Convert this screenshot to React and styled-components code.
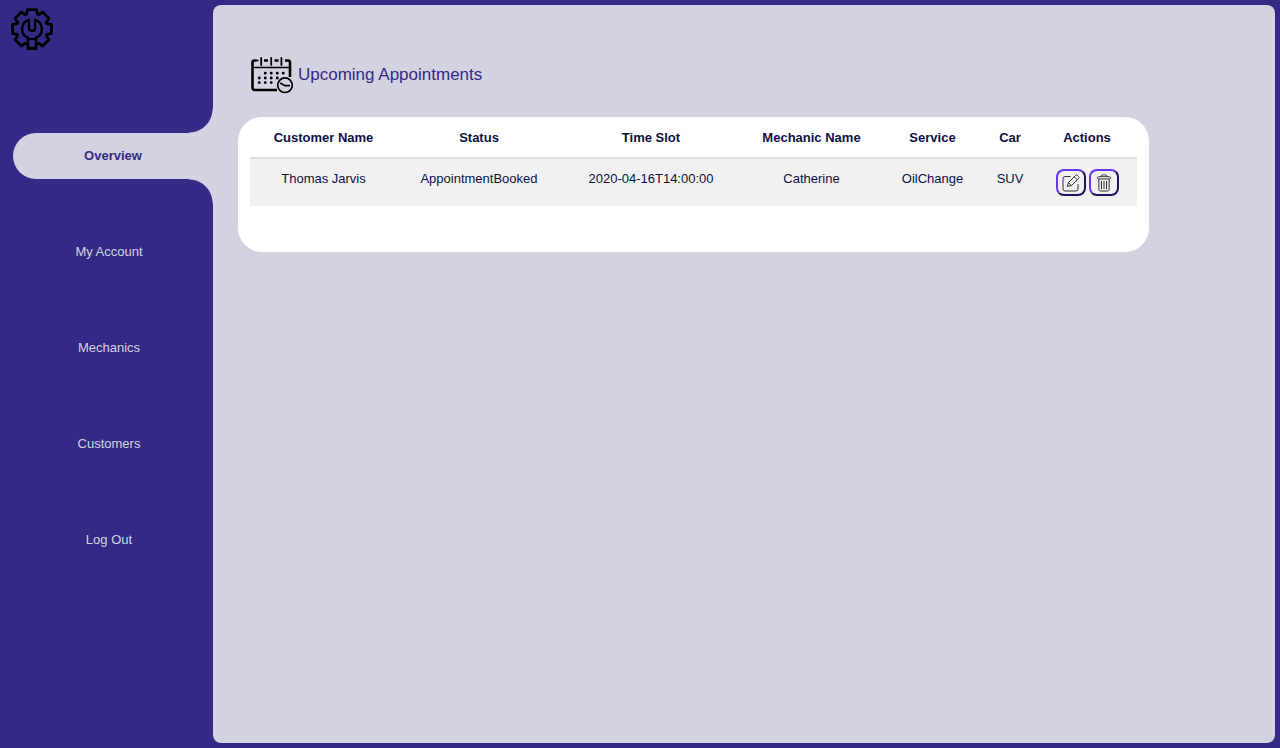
import React, { useState } from "react";
import styled, { createGlobalStyle } from "styled-components";

const navItems = ["Overview", "My Account", "Mechanics", "Customers", "Log Out"];

const columns = [
	{ title: "Customer Name", width: 147 },
	{ title: "Status", width: 164 },
	{ title: "Time Slot", width: 180 },
	{ title: "Mechanic Name", width: 141 },
	{ title: "Service", width: 101 },
	{ title: "Car", width: 54 },
	{ title: "Actions", width: 100 },
];

const initialAppointments = [
	{
		id: 1,
		customer: "Thomas Jarvis",
		status: "AppointmentBooked",
		timeSlot: "2020-04-16T14:00:00",
		mechanic: "Catherine",
		service: "OilChange",
		car: "SUV",
	},
];

const GearLogo = () => (
	<svg width="42" height="42" viewBox="-21 -21 42 42" fill="none" stroke="#000" strokeWidth="2.8" strokeLinejoin="round" aria-hidden="true">
		<path d="M-5.4-14.8-4.6-19.4H4.6L5.4-14.8 6.7-14.2 10.6-17 17-10.6 14.2-6.7 14.8-5.4 19.4-4.6V4.6L14.8 5.4 14.2 6.7 17 10.6 10.6 17 6.7 14.2 4 15.4V19.4H-4V15.4L-6.7 14.2-10.6 17-17 10.6-14.2 6.7-14.8 5.4-19.4 4.6V-4.6L-14.8-5.4-14.2-6.7-17-10.6-10.6-17-6.7-14.2Z" />
		<path d="M-3-9.3A9.8 9.8 0 0 0-4 9V19.4H4V9A9.8 9.8 0 0 0 3-9.3V0Q3 1.8 0 1.8T-3 0Z" strokeWidth="2.5" />
		<path d="M-4 10H4" strokeWidth="2" />
	</svg>
);

const CalendarIcon = () => (
	<svg width="43" height="40" viewBox="0 -2 43 40" fill="none" stroke="#000" aria-hidden="true">
		<path d="M5.5 3.5H3.5Q1.5 3.5 1.5 5.5V30.5Q1.5 33 4 33H26M13 3.5H17M23.5 3.5H27.5M34 3.5H37Q39 3.5 39 5.5V20" strokeWidth="2.6" />
		<path d="M5 3.5H7.5M2 10.5H39" strokeWidth="1.6" />
		<path d="M10.2 1V8M20.2 1V8M30.4 1V8" strokeWidth="1.8" strokeLinecap="round" />
		<path
			d="M14.2 16.2H14.3M20.2 16.2H20.3M26.2 16.2H26.3M32.2 16.2H32.3M8.2 21H8.3M14.2 21H14.3M20.2 21H20.3M26.2 21H26.3M8.2 25.6H8.3M14.2 25.6H14.3M20.2 25.6H20.3"
			strokeWidth="2.8"
			strokeLinecap="round"
		/>
		<circle cx="34" cy="28.2" r="7.3" strokeWidth="1.7" />
		<path d="M29.2 26 34 28.6H39" strokeWidth="1.6" />
	</svg>
);

const EditIcon = () => (
	<svg width="18" height="18" viewBox="0 0 18 18" fill="none" stroke="#333" strokeWidth="1" strokeLinejoin="round" aria-hidden="true">
		<path d="M8.5 2.5H3Q1 2.5 1 4.5V15Q1 17 3 17H14Q16 17 16 15V10" />
		<path d="M5.3 12.4 6.4 8.6 13.6 1.4Q14.5.6 15.4 1.4L16.6 2.6Q17.4 3.5 16.6 4.4L9.4 11.6ZM12.2 2.8 15.2 5.8M6.4 8.6 9.4 11.6" />
	</svg>
);

const TrashIcon = () => (
	<svg width="16" height="18" viewBox="0 0 16 18" fill="none" stroke="#333" strokeWidth="1" strokeLinejoin="round" aria-hidden="true">
		<path d="M2.9 5V15.3Q2.9 17 4.6 17H11.4Q13.1 17 13.1 15.3V5M2.5 2.7H13.5Q14.5 2.7 14.5 3.8 14.5 5 13.5 5H2.5Q1.5 5 1.5 3.8 1.5 2.7 2.5 2.7ZM5 2.7Q5 .9 6.5.9H9.5Q11 .9 11 2.7M5.5 7V15M8 7V15M10.5 7V15" />
	</svg>
);

const AppointmentTable = (props) => {
	return (
		<Card>
			<Table>
				<colgroup>
					{columns.map((column) => (
						<Column key={column.title} $width={column.width} />
					))}
				</colgroup>
				<thead>
					<tr>
						{columns.map((column) => (
							<th key={column.title} scope="col">
								{column.title}
							</th>
						))}
					</tr>
				</thead>
				<tbody>
					{props.appointments.map((item) => (
						<tr key={item.id}>
							<td>{item.customer}</td>
							<td>{item.status}</td>
							<td>{item.timeSlot}</td>
							<td>{item.mechanic}</td>
							<td>{item.service}</td>
							<td>{item.car}</td>
							<td>
								<Actions>
									<ActionButton type="button" aria-label="Edit appointment">
										<EditIcon />
									</ActionButton>
									<ActionButton
										type="button"
										aria-label="Delete appointment"
										onClick={() => props.onDelete(item.id)}
									>
										<TrashIcon />
									</ActionButton>
								</Actions>
							</td>
						</tr>
					))}
				</tbody>
			</Table>
		</Card>
	);
};

const App = () => {
	const [activeItem, setActiveItem] = useState("Overview");
	const [appointments, setAppointments] = useState(initialAppointments);

	const navClickHandler = (event, item) => {
		event.preventDefault();
		setActiveItem(item);
	};

	const deleteHandler = (id) => {
		setAppointments((prev) => prev.filter((item) => item.id !== id));
	};

	return (
		<>
			<GlobalStyle />
			<Page>
				<Sidebar>
					<Logo>
						<GearLogo />
					</Logo>
					<Nav>
						{navItems.map((item) => (
							<NavLink
								key={item}
								href="#"
								$active={item === activeItem}
								onClick={(event) => navClickHandler(event, item)}
							>
								{item}
							</NavLink>
						))}
					</Nav>
				</Sidebar>
				<Main>
					<Heading>
						<CalendarIcon />
						<h1>Upcoming Appointments</h1>
					</Heading>
					<AppointmentTable appointments={appointments} onDelete={deleteHandler} />
				</Main>
			</Page>
		</>
	);
};

export default App;

const GlobalStyle = createGlobalStyle`
	* {
		box-sizing: border-box;
	}

	body {
		margin: 0;
		background: #332a86;
		font-family: "Liberation Sans", Arial, sans-serif;
		font-size: 13px;
		line-height: 21px;
	}
`;

const Page = styled.div`
	display: flex;
	min-height: 100vh;
	padding: 5px 5px 5px 0;
`;

const Sidebar = styled.aside`
	flex: 0 0 213px;
`;

const Logo = styled.div`
	height: 128px;
	padding: 3px 11px;
`;

const Nav = styled.nav`
	display: flex;
	flex-direction: column;
	gap: 50px;
`;

const NavLink = styled.a`
	position: relative;
	display: flex;
	align-items: center;
	justify-content: center;
	height: 46px;
	margin-left: ${(props) => (props.$active ? "13px" : "5px")};
	padding-bottom: 2px;
	border-radius: 23px 0 0 23px;
	background: ${(props) => (props.$active ? "#d3d2e0" : "transparent")};
	color: ${(props) => (props.$active ? "#332a86" : "#d3d2e0")};
	font-weight: ${(props) => (props.$active ? "bold" : "normal")};
	text-decoration: none;

	/* curved joins between the active tab and the panel */
	&::before,
	&::after {
		content: "";
		display: ${(props) => (props.$active ? "block" : "none")};
		position: absolute;
		right: 0;
		width: 24px;
		height: 24px;
	}

	&::before {
		bottom: 100%;
		background: radial-gradient(circle at 0 0, transparent 23px, #d3d2e0 24px);
	}

	&::after {
		top: 100%;
		background: radial-gradient(circle at 0 100%, transparent 23px, #d3d2e0 24px);
	}
`;

const Main = styled.main`
	flex: 1;
	min-width: 0;
	padding: 50px 126px 25px 25px;
	border-radius: 8px;
	background: #d3d2e0;
`;

const Heading = styled.header`
	display: flex;
	align-items: center;
	gap: 4px;
	height: 40px;
	margin: 0 0 22px 13px;

	h1 {
		margin: 0;
		padding-bottom: 2px;
		color: #332a86;
		font-size: 17px;
		font-weight: normal;
	}
`;

const Card = styled.section`
	min-height: 135px;
	padding: 0 12px;
	border-radius: 24px;
	background: #fff;
`;

const Table = styled.table`
	width: 100%;
	table-layout: fixed;
	border-collapse: collapse;
	color: #0b1145;
	text-align: center;

	th {
		padding: 10px 0 9px;
		border-bottom: 2px solid #dee2e6;
	}

	td {
		height: 48px;
		padding: 9px 0;
		vertical-align: top;
	}

	tbody tr:nth-child(odd) {
		background: #f1f1f1;
	}
`;

const Column = styled.col`
	width: ${(props) => props.$width}px;
`;

const Actions = styled.div`
	display: flex;
	justify-content: center;
	gap: 3px;
	padding-top: 1px;
`;

const ActionButton = styled.button`
	display: flex;
	align-items: center;
	justify-content: center;
	width: 30px;
	height: 27px;
	padding: 0;
	border: 2px solid;
	border-color: #6438f0 #24105f #24105f #6438f0;
	border-radius: 8px;
	background: #f1f1f1;
	cursor: pointer;
`;
